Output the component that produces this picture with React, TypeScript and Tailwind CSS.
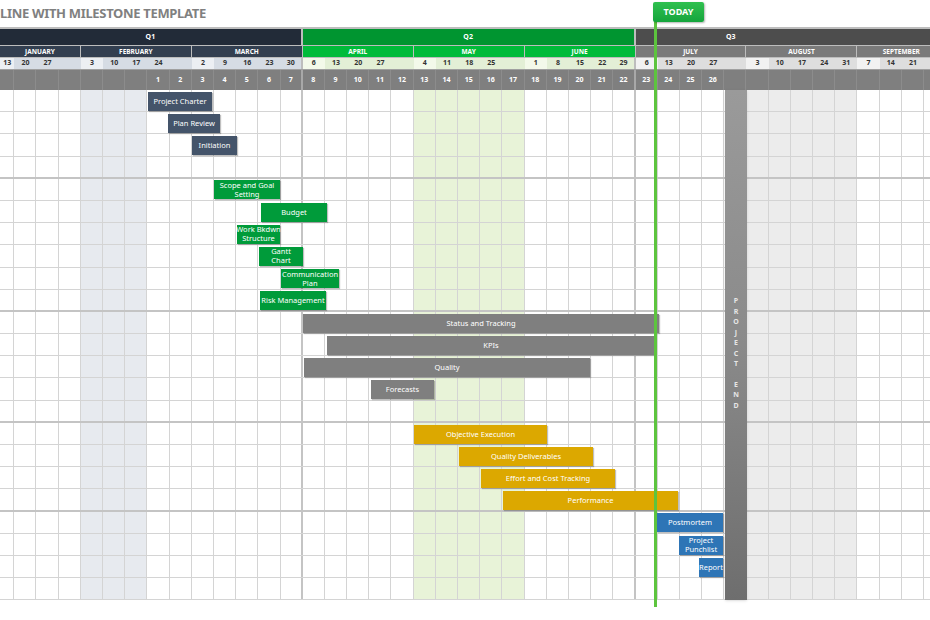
import React from "react";

const dates = ["13","20","27","","3","10","17","24","","2","9","16","23","30","6","13","20","27","","4","11","18","25","","1","8","15","22","29","6","13","20","27","","3","10","17","24","31","7","14","21",""];
const firstOfMonth = new Set([4, 9, 14, 19, 24, 29, 34, 39]);
const months = [
  { n: "JANUARY", s: 0, e: 3, q: 1 },
  { n: "FEBRUARY", s: 4, e: 8, q: 1 },
  { n: "MARCH", s: 9, e: 13, q: 1 },
  { n: "APRIL", s: 14, e: 18, q: 2 },
  { n: "MAY", s: 19, e: 23, q: 2 },
  { n: "JUNE", s: 24, e: 28, q: 2 },
  { n: "JULY", s: 29, e: 33, q: 3 },
  { n: "AUGUST", s: 34, e: 38, q: 3 },
  { n: "SEPTEMBER", s: 39, e: 42, q: 3 },
];
const NAVY = "#44546a", GREEN = "#009b3a", GRAY = "#7f7f7f", GOLD = "#dca800", BLUE = "#2e75b6";
const bars: { r: number; x1: number; x2: number; c: string; t: string[] }[] = [
  { r: 0, x1: 148, x2: 212, c: NAVY, t: ["Project Charter"] },
  { r: 1, x1: 168, x2: 220, c: NAVY, t: ["Plan Review"] },
  { r: 2, x1: 192, x2: 237, c: NAVY, t: ["Initiation"] },
  { r: 4, x1: 214, x2: 280, c: GREEN, t: ["Scope and Goal", "Setting"] },
  { r: 5, x1: 261, x2: 327, c: GREEN, t: ["Budget"] },
  { r: 6, x1: 237, x2: 280, c: GREEN, t: ["Work Bkdwn", "Structure"] },
  { r: 7, x1: 259, x2: 303, c: GREEN, t: ["Gantt", "Chart"] },
  { r: 8, x1: 281, x2: 339, c: GREEN, t: ["Communication", "Plan"] },
  { r: 9, x1: 260, x2: 326, c: GREEN, t: ["Risk Management"] },
  { r: 10, x1: 303, x2: 659, c: GRAY, t: ["Status  and Tracking"] },
  { r: 11, x1: 327, x2: 655, c: GRAY, t: ["KPIs"] },
  { r: 12, x1: 304, x2: 590, c: GRAY, t: ["Quality"] },
  { r: 13, x1: 371, x2: 434, c: GRAY, t: ["Forecasts"] },
  { r: 15, x1: 414, x2: 547, c: GOLD, t: ["Objective Execution"] },
  { r: 16, x1: 459, x2: 593, c: GOLD, t: ["Quality Deliverables"] },
  { r: 17, x1: 481, x2: 615, c: GOLD, t: ["Effort and Cost Tracking"] },
  { r: 18, x1: 503, x2: 678, c: GOLD, t: ["Performance"] },
  { r: 19, x1: 657, x2: 723, c: BLUE, t: ["Postmortem"] },
  { r: 20, x1: 679, x2: 723, c: BLUE, t: ["Project", "Punchlist"] },
  { r: 21, x1: 699, x2: 723, c: BLUE, t: ["Report"] },
];
const cols = Array.from({ length: 43 }, (_, i) => i);
const rows = Array.from({ length: 23 }, (_, i) => i);
const thickRows = new Set([3, 9, 14, 18]);
const RH = 22.2;

function dateBg(i: number) {
  if (i < 14) return firstOfMonth.has(i) || i === 0 ? "bg-[#eceff3]" : "bg-[#d6dce4]";
  if (i < 29) return firstOfMonth.has(i) ? "bg-[#f3f9ea]" : "bg-[#e3efd6]";
  return firstOfMonth.has(i) ? "bg-[#f2f2f2]" : "bg-[#dedede]";
}
function cellBg(i: number) {
  if (i >= 4 && i <= 6) return "bg-[#e7eaef]";
  if (i >= 19 && i <= 23) return "bg-[#e8f3d8]";
  if (i >= 34 && i <= 38) return "bg-[#ececec]";
  return "bg-white";
}

export default function App() {
  const grid = "grid grid-cols-[14.3px_repeat(42,22.2px)]";
  return (
    <div className="relative w-[930px] h-[620px] overflow-hidden bg-white font-['Liberation_Sans',Arial,sans-serif]">
      <div className="h-[27px] flex items-center pl-0 text-[13px] font-bold text-[#808080] tracking-tight">LINE WITH MILESTONE TEMPLATE</div>
      <div className="w-[950px] border-t-2 border-[#bdbdbd]">
        {/* quarters */}
        <div className={`${grid} h-[16px] text-white text-[7px] font-bold`}>
          <div className="col-span-14 bg-[#222b38] flex items-center justify-center border-r-2 border-[#bdbdbd]">Q1</div>
          <div className="col-span-15 bg-[#009530] flex items-center justify-center border-r-2 border-[#bdbdbd]">Q2</div>
          <div className="col-span-14 bg-[#4d4d4d] flex items-center justify-center pr-[120px]">Q3</div>
        </div>
        {/* months */}
        <div className={`${grid} h-[12px] text-white text-[6.5px] font-bold border-t border-[#bdbdbd]`}>
          {months.map((m) => (
            <div
              key={m.n}
              style={{ gridColumn: `${m.s + 1} / ${m.e + 2}` }}
              className={`flex items-center justify-center border-r border-[#bdbdbd] ${m.q === 1 ? "bg-[#333f50]" : m.q === 2 ? "bg-[#00bb3a]" : "bg-[#7a7a7a]"}`}
            >
              {m.n}
            </div>
          ))}
        </div>
        {/* dates */}
        <div className={`${grid} h-[11px] text-[#333] text-[7px] font-bold border-t border-[#bdbdbd]`}>
          {cols.map((i) => (
            <div key={i} className={`flex items-center justify-center ${dateBg(i)} ${i === 13 || i === 28 ? "border-r-2 border-[#bdbdbd]" : ""}`}>{dates[i] ?? ""}</div>
          ))}
        </div>
        {/* week numbers */}
        <div className={`${grid} h-[22px] bg-[#7f7f7f] text-white text-[7px] font-bold border-t-2 border-[#a0a0a0]`}>
          {cols.map((i) => (
            <div key={i} className={`flex items-center justify-center border-r border-[#8c8c8c] ${i === 13 || i === 28 ? "border-r-2 border-r-[#a8a8a8]" : ""}`}>
              {i >= 7 && i <= 32 ? i - 6 : ""}
            </div>
          ))}
        </div>
        {/* body */}
        <div className="relative">
          {rows.map((r) => (
            <div key={r} className={`${grid} h-[22.2px] border-b ${thickRows.has(r) ? "border-b-2 border-[#c4c4c4]" : "border-[#d4d4d4]"}`}>
              {cols.map((i) => (
                <div key={i} className={`${cellBg(i)} border-r ${i === 13 || i === 28 ? "border-r-2 border-[#c4c4c4]" : "border-[#d4d4d4]"}`} />
              ))}
            </div>
          ))}
          {/* project end */}
          <div className="absolute top-0 bottom-0 left-[725px] w-[22px] bg-gradient-to-b from-[#9a9a9a] via-[#8a8a8a] to-[#6e6e6e] shadow flex flex-col items-center pt-[206px] text-[#e6e6e6] text-[7px] leading-[10.5px] font-bold">
            {"PROJECT".split("").map((c, k) => <span key={k}>{c}</span>)}
            <span className="h-[10px]" />
            {"END".split("").map((c, k) => <span key={"e" + k}>{c}</span>)}
          </div>
          {bars.map((b, k) => (
            <div
              key={k}
              className="absolute flex flex-col items-center justify-center text-white text-[7.5px] leading-[9px] text-center shadow-[1px_1px_1px_rgba(0,0,0,0.25)]"
              style={{ left: b.x1, width: b.x2 - b.x1, top: b.r * RH + 1.5, height: RH - 3, background: b.c }}
            >
              {b.t.map((l, j) => <span key={j} className="whitespace-nowrap">{l}</span>)}
            </div>
          ))}
        </div>
      </div>
      {/* today marker */}
      <div className="absolute left-[654px] top-[10px] h-[597px] w-[3px] bg-[#5dc43e]" />
      <div className="absolute left-[653px] top-[2px] w-[51px] h-[20px] rounded-[2px] bg-gradient-to-b from-[#2fc04f] to-[#14a53c] shadow-[1px_1px_2px_rgba(0,0,0,0.3)] flex items-center justify-center text-white text-[9px] font-bold">TODAY</div>
    </div>
  );
}
